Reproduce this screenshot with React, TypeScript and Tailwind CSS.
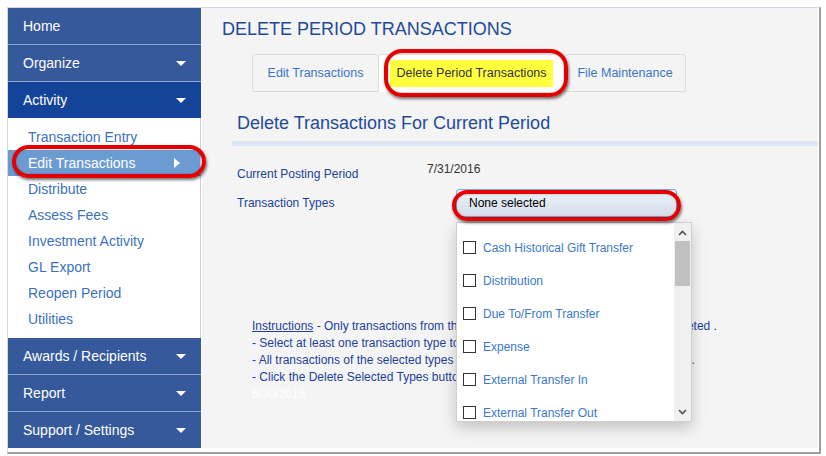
import React from 'react';

const font = { fontFamily: '"Liberation Sans", Arial, sans-serif' };

const subItems = [
  'Transaction Entry',
  'Edit Transactions',
  'Distribute',
  'Assess Fees',
  'Investment Activity',
  'GL Export',
  'Reopen Period',
  'Utilities',
];

const types = [
  'Cash Historical Gift Transfer',
  'Distribution',
  'Due To/From Transfer',
  'Expense',
  'External Transfer In',
  'External Transfer Out',
];

function Caret() {
  return (
    <span className="w-0 h-0 border-l-[5px] border-r-[5px] border-t-[5px] border-l-transparent border-r-transparent border-t-white" />
  );
}

function NavHeader({ label, caret = true }: { label: string; caret?: boolean }) {
  return (
    <div className="h-[37px] flex items-center justify-between pl-[15px] pr-[15px] text-white text-[14px] border-b border-[#8ea6cf] bg-[#36599c]">
      <span>{label}</span>
      {caret && <Caret />}
    </div>
  );
}

function Annotation({ className }: { className: string }) {
  return (
    <div
      className={`absolute rounded-[18px] border-[4px] border-[#e50000] shadow-[1px_2px_3px_rgba(0,0,0,0.55),inset_0_0_2px_rgba(0,0,0,0.35)] pointer-events-none ${className}`}
    />
  );
}

export default function App() {
  return (
    <div className="relative w-[826px] h-[456px] bg-white pt-[7px] pl-[7px] overflow-hidden" style={font}>
      <div className="w-[814px] h-[447px] border-t border-l border-[#d3d8e2] border-r-2 border-b-2 border-r-[#9e9e9e] border-b-[#9e9e9e] pr-[1px] pb-[4px]">
        <div className="flex w-[810px] h-[440px]">
          {/* sidebar */}
          <div className="w-[193px] flex flex-col">
            <NavHeader label="Home" caret={false} />
            <NavHeader label="Organize" />
            <div className="h-[36px] flex items-center justify-between pl-[15px] pr-[15px] text-white text-[14px] bg-[#13449a]">
              <span>Activity</span>
              <Caret />
            </div>
            <div className="h-[220px] bg-white pt-[6px] pb-[6px] border-r border-[#c9cfd9]">
              {subItems.map((s) =>
                s === 'Edit Transactions' ? (
                  <div key={s} className="h-[26px] flex items-center justify-between pl-[20px] pr-[20px] bg-[#6c9bd2] text-white text-[14px]">
                    <span>{s}</span>
                    <span className="w-0 h-0 border-t-[5px] border-b-[5px] border-l-[6px] border-t-transparent border-b-transparent border-l-white" />
                  </div>
                ) : (
                  <div key={s} className="h-[26px] flex items-center pl-[20px] text-[#3b72bb] text-[14px]">
                    {s}
                  </div>
                )
              )}
            </div>
            <NavHeader label="Awards / Recipients" />
            <NavHeader label="Report" />
            <div className="h-[36px] flex items-center justify-between pl-[15px] pr-[15px] text-white text-[14px] bg-[#36599c]">
              <span>Support / Settings</span>
              <Caret />
            </div>
          </div>

          {/* main */}
          <div className="flex-1 ml-[1px] bg-[#f4f4f4] flex flex-col">
            <h1 className="pl-[20px] pt-[10px] text-[18px] leading-[22px] text-[#1f4a98]">DELETE PERIOD TRANSACTIONS</h1>

            <div className="flex ml-[50px] mt-[14px] h-[38px] text-[12.5px]">
              <div className="w-[127px] flex items-center justify-center border border-[#dcdcdc] rounded-t-[4px] text-[#3b74c6]">
                Edit Transactions
              </div>
              <div className="w-[185px] flex items-center justify-center bg-white border-t border-[#dcdcdc] rounded-t-[4px]">
                <span className="bg-[#ffff3f] text-[#333] px-[6px] py-[4px]">Delete Period Transactions</span>
              </div>
              <div className="w-[122px] flex items-center justify-center border border-[#dcdcdc] rounded-t-[4px] text-[#3b74c6]">
                File Maintenance
              </div>
            </div>

            <h2 className="ml-[35px] mt-[20px] text-[18px] leading-[22px] text-[#1f4a98]">Delete Transactions For Current Period</h2>
            <div className="ml-[30px] mt-[7px] h-[5px] bg-[#dce6f4]" />

            <div className="ml-[35px] mt-[16px] text-[12px] leading-[14px] text-[#233f99]">
              <div className="flex h-[22px]">
                <span className="w-[190px] pt-[5px]">Current Posting Period</span>
                <span className="text-[#333]">7/31/2016</span>
              </div>
              <div className="flex h-[28px] items-center mt-[5px]">
                <span className="w-[219px]">Transaction Types</span>
                <div className="w-[221px] h-[28px] border border-[#7aa7de] rounded-[3px] bg-gradient-to-b from-[#eef2f8] to-[#d3ddeb] flex items-center pl-[12px] text-black">
                  None selected
                </div>
              </div>
            </div>

            <div className="ml-[50px] mt-[101px] text-[12px] leading-[17px] text-[#233f99]">
              <div className="whitespace-nowrap">
                <span className="underline">Instructions</span> - Only transactions from the current posting period are ready to be deleted .
              </div>
              <div className="whitespace-nowrap">- Select at least one transaction type to delete.</div>
              <div className="whitespace-nowrap">- All transactions of the selected types will be permanently deleted from this period .</div>
              <div className="whitespace-nowrap">- Click the Delete Selected Types button to proceed.</div>
              <div className="text-white">6/30/2016</div>
            </div>
          </div>
        </div>
      </div>

      {/* dropdown list */}
      <div className="absolute left-[456px] top-[222px] w-[236px] h-[200px] bg-white border border-[#cfcfcf] shadow-[0_6px_14px_rgba(0,0,0,0.2)] flex overflow-hidden text-[12px]" style={font}>
        <div className="flex-1 pt-[8px] pl-[6px]">
          {types.map((t) => (
            <div key={t} className="h-[33px] flex items-center">
              <span className="w-[13px] h-[13px] border border-[#333] bg-white mr-[7px]" />
              <span className="text-[#3b78c9]">{t}</span>
            </div>
          ))}
        </div>
        <div className="w-[17px] bg-[#f0f0f0] flex flex-col items-center">
          <svg width="9" height="6" viewBox="0 0 9 6" className="mt-[7px]">
            <path d="M1 5 L4.5 1.5 L8 5" stroke="#505050" strokeWidth="1.6" fill="none" />
          </svg>
          <div className="w-[15px] h-[45px] bg-[#c1c1c1] mt-[5px]" />
          <div className="flex-1" />
          <svg width="9" height="6" viewBox="0 0 9 6" className="mb-[6px]">
            <path d="M1 1 L4.5 4.5 L8 1" stroke="#505050" strokeWidth="1.6" fill="none" />
          </svg>
        </div>
      </div>

      <Annotation className="left-[12px] top-[145px] w-[194px] h-[33px]" />
      <Annotation className="left-[384px] top-[49px] w-[184px] h-[48px]" />
      <Annotation className="left-[452px] top-[190px] w-[229px] h-[31px]" />
    </div>
  );
}
